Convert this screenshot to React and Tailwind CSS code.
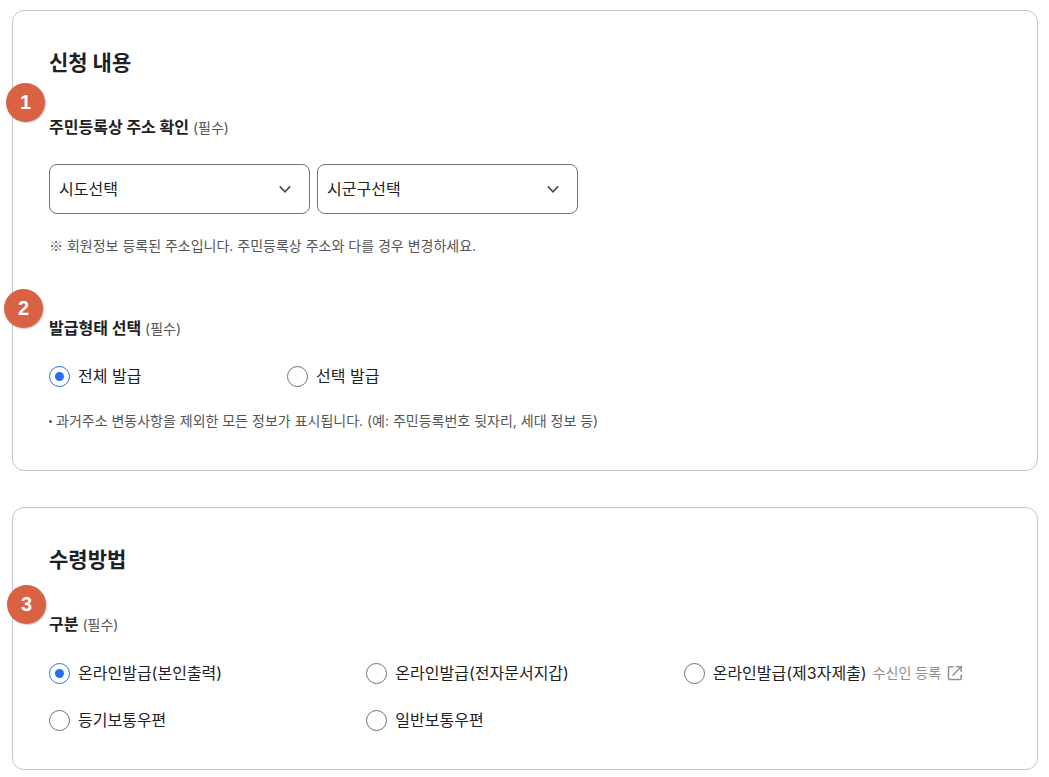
import React, { useState } from 'react';

const issueTypes = [
  { value: 'all', label: '전체 발급' },
  { value: 'select', label: '선택 발급' },
];

const receiveMethods = [
  { value: 'print', label: '온라인발급(본인출력)' },
  { value: 'wallet', label: '온라인발급(전자문서지갑)' },
  { value: 'third', label: '온라인발급(제3자제출)', link: '수신인 등록' },
  { value: 'registered', label: '등기보통우편' },
  { value: 'mail', label: '일반보통우편' },
];

const ChevronIcon = () => (
  <svg
    className="pointer-events-none absolute right-[19px] top-[19px]"
    width="12"
    height="12"
    viewBox="0 0 12 12"
    fill="none"
    stroke="#464c53"
    strokeWidth="1.6"
    aria-hidden="true"
  >
    <path d="M0.8 3.4 L6 8.8 L11.2 3.4" />
  </svg>
);

const ExternalIcon = () => (
  <svg width="16" height="16" viewBox="0 0 16 16" fill="none" stroke="currentColor" strokeWidth="1.5" aria-hidden="true">
    <path d="M6.5 1.8 H2.5 A1 1 0 0 0 1.5 2.8 V13.5 A1 1 0 0 0 2.5 14.5 H13.2 A1 1 0 0 0 14.2 13.5 V9.5" />
    <path d="M9.3 1.8 H14.2 V6.7" />
    <path d="M14 2 L5.5 10.5" />
  </svg>
);

const StepBadge = ({ number, className }) => (
  <span
    className={`absolute flex size-[39px] items-center justify-center rounded-full bg-[#d96243] pb-px font-['Liberation_Sans',sans-serif] text-xl font-bold text-white shadow-[1px_1px_1px_rgba(0,0,0,0.2)] ${className}`}
  >
    {number}
  </span>
);

const Card = ({ title, children }) => (
  <section className="rounded-xl border border-[#c6c6c6] bg-white px-9 pt-9">
    <h2 className="text-[21px] font-bold leading-8">{title}</h2>
    {children}
  </section>
);

const Required = () => <span className="text-sm font-normal leading-6 text-[#555]"> (필수)</span>;

const SelectBox = ({ label, placeholder }) => (
  <div className="relative w-[261px]">
    <select
      aria-label={label}
      className="h-[50px] w-full appearance-none rounded-lg border border-[#717171] bg-white px-[9px] text-base"
    >
      <option>{placeholder}</option>
    </select>
    <ChevronIcon />
  </div>
);

const Radio = ({ name, option, checked, onChange }) => (
  <div className="flex items-center gap-[6px]">
    <label className="flex items-center gap-2 whitespace-nowrap leading-6">
      <input
        type="radio"
        name={name}
        value={option.value}
        checked={checked}
        onChange={() => onChange(option.value)}
        className="grid size-[21px] shrink-0 appearance-none place-content-center rounded-full border border-[#717171] before:size-[9px] before:rounded-full checked:border-[#256ef4] checked:before:bg-[#256ef4]"
      />
      {option.label}
    </label>
    {option.link && (
      <a href="#recipient" className="flex items-center gap-[6px] whitespace-nowrap text-sm leading-6 text-[#8e8e8e]">
        {option.link}
        <ExternalIcon />
      </a>
    )}
  </div>
);

const App = () => {
  const [issueType, setIssueType] = useState('all');
  const [method, setMethod] = useState('print');

  return (
    <main className="flex flex-col gap-9 pt-[10px] pr-[11px] pb-[7px] pl-3 font-['Inter','Noto_Sans_CJK_KR',sans-serif] text-base text-[#1e2124]">
      <Card title="신청 내용">
        {/* Address */}
        <div className="relative mt-9">
          <StepBadge number={1} className="-left-[43px] -top-8" />
          <h3 className="font-bold leading-6">
            주민등록상 주소 확인
            <Required />
          </h3>
          <div className="mt-6 flex gap-[7px]">
            <SelectBox label="시도" placeholder="시도선택" />
            <SelectBox label="시군구" placeholder="시군구선택" />
          </div>
          <p className="mt-[22px] text-sm leading-5 text-[#555]">
            <span className="font-['Noto_Sans_CJK_KR',sans-serif] leading-none">※</span> 회원정보 등록된 주소입니다. 주민등록상 주소와 다를 경우 변경하세요.
          </p>
        </div>

        {/* Issue type */}
        <div role="radiogroup" aria-labelledby="issue-type" className="relative mt-[60px] pb-[39px]">
          <StepBadge number={2} className="-left-[45px] -top-[27px]" />
          <h3 id="issue-type" className="font-bold leading-6">
            발급형태 선택
            <Required />
          </h3>
          <div className="mt-[23px] grid grid-cols-4">
            {issueTypes.map((option) => (
              <Radio
                key={option.value}
                name="issueType"
                option={option}
                checked={issueType === option.value}
                onChange={setIssueType}
              />
            ))}
          </div>
          <ul className="mt-[23px] text-sm leading-5 text-[#555]">
            <li className="flex items-center gap-1 before:size-[3px] before:rounded-full before:bg-[#555]">
              과거주소 변동사항을 제외한 모든 정보가 표시됩니다. (예: 주민등록번호 뒷자리, 세대 정보 등)
            </li>
          </ul>
        </div>
      </Card>

      <Card title="수령방법">
        <div role="radiogroup" aria-labelledby="receive-method" className="relative mt-9 pb-[37px]">
          <StepBadge number={3} className="-left-[42px] -top-[27px]" />
          <h3 id="receive-method" className="font-bold leading-6">
            구분
            <Required />
          </h3>
          <div className="mt-6 grid grid-cols-3 gap-y-[23px]">
            {receiveMethods.map((option) => (
              <Radio
                key={option.value}
                name="method"
                option={option}
                checked={method === option.value}
                onChange={setMethod}
              />
            ))}
          </div>
        </div>
      </Card>
    </main>
  );
};

export default App;
